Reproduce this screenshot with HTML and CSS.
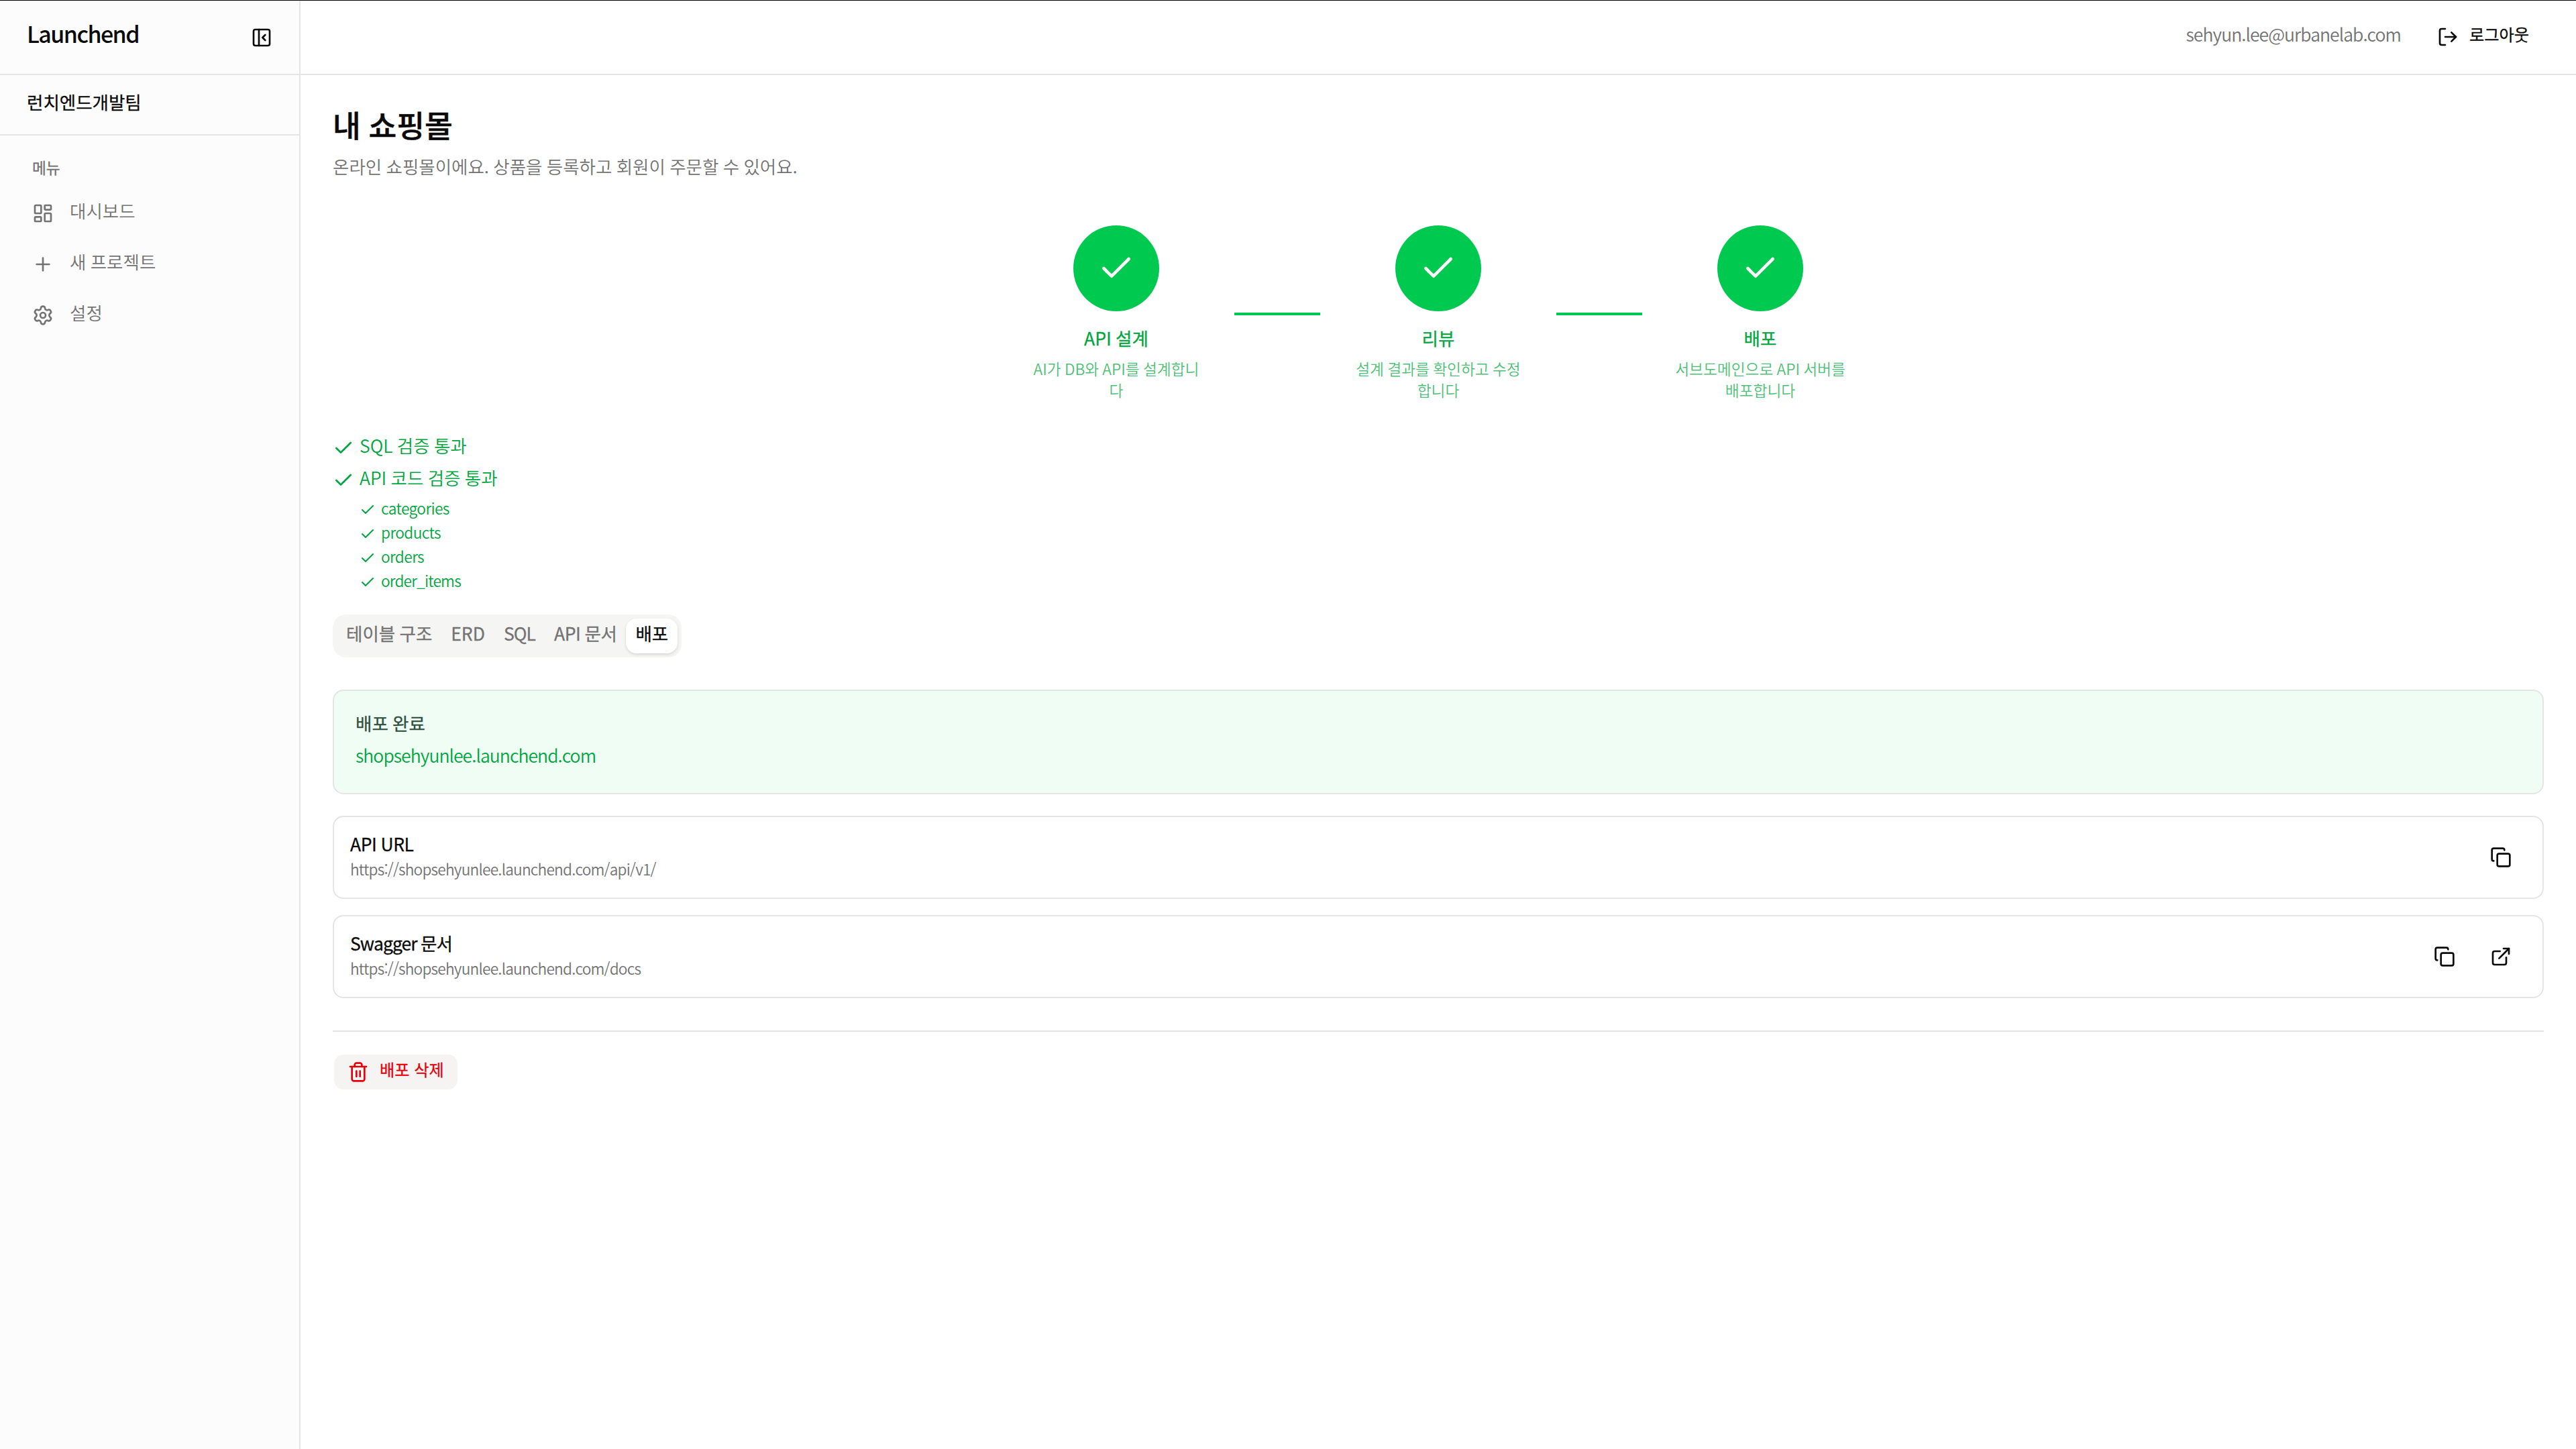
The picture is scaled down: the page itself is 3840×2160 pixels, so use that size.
FILE: index.html
```html
<!DOCTYPE html>
<html lang="ko">
<head>
  <meta charset="utf-8">
  <title>Launchend</title>
  <meta name="viewport" content="width=device-width, initial-scale=1">
  <link rel="stylesheet" href="styles.css">
</head>
<body>
  <aside class="sidebar">
    <div class="brand">
      <span class="text logo">Launchend</span>
      <svg class="icon" viewBox="0 0 24 24"><rect x="3" y="3" width="18" height="18" rx="2"/><path d="M9 3v18"/><path d="m16 15-3-3 3-3"/></svg>
    </div>
    <div class="team"><span class="text medium">런치엔드개발팀</span></div>
    <nav class="menu">
      <span class="text small medium menu-label">메뉴</span>
      <a class="menu-item">
        <svg class="icon" viewBox="0 0 24 24"><rect x="3" y="3" width="7" height="9" rx="1"/><rect x="14" y="3" width="7" height="5" rx="1"/><rect x="14" y="12" width="7" height="9" rx="1"/><rect x="3" y="16" width="7" height="5" rx="1"/></svg>
        <span class="text">대시보드</span>
      </a>
      <a class="menu-item">
        <svg class="icon" viewBox="0 0 24 24"><path d="M5 12h14"/><path d="M12 5v14"/></svg>
        <span class="text">새 프로젝트</span>
      </a>
      <a class="menu-item">
        <svg class="icon" viewBox="0 0 24 24"><path d="M9.671 4.136a2.34 2.34 0 0 1 4.659 0 2.34 2.34 0 0 0 3.319 1.915 2.34 2.34 0 0 1 2.33 4.033 2.34 2.34 0 0 0 0 3.831 2.34 2.34 0 0 1-2.33 4.033 2.34 2.34 0 0 0-3.319 1.915 2.34 2.34 0 0 1-4.659 0 2.34 2.34 0 0 0-3.32-1.915 2.34 2.34 0 0 1-2.33-4.033 2.34 2.34 0 0 0 0-3.831A2.34 2.34 0 0 1 6.35 6.051a2.34 2.34 0 0 0 3.319-1.915"/><circle cx="12" cy="12" r="3"/></svg>
        <span class="text">설정</span>
      </a>
    </nav>
  </aside>

  <div class="page">
    <header class="topbar">
      <span class="text latin muted">sehyun.lee@urbanelab.com</span>
      <button class="btn">
        <svg class="icon" viewBox="0 0 24 24"><path d="M9 21H5a2 2 0 0 1-2-2V5a2 2 0 0 1 2-2h4"/><path d="m16 17 5-5-5-5"/><path d="M21 12H9"/></svg>
        <span class="text medium">로그아웃</span>
      </button>
    </header>

    <main class="content">
      <h1 class="text title">내 쇼핑몰</h1>
      <p class="text muted subtitle">온라인 쇼핑몰이에요. 상품을 등록하고 회원이 주문할 수 있어요.</p>

      <div class="stepper">
        <div class="step">
          <div class="circle"><svg class="icon" viewBox="0 0 24 24"><path d="M20 6 9 17l-5-5"/></svg></div>
          <span class="text medium">API 설계</span>
          <p class="text small step-desc">AI가 DB와 API를 설계합니다</p>
        </div>
        <div class="line"></div>
        <div class="step">
          <div class="circle"><svg class="icon" viewBox="0 0 24 24"><path d="M20 6 9 17l-5-5"/></svg></div>
          <span class="text medium">리뷰</span>
          <p class="text small step-desc">설계 결과를 확인하고 수정합니다</p>
        </div>
        <div class="line"></div>
        <div class="step">
          <div class="circle"><svg class="icon" viewBox="0 0 24 24"><path d="M20 6 9 17l-5-5"/></svg></div>
          <span class="text medium">배포</span>
          <p class="text small step-desc">서브도메인으로 API 서버를 배포합니다</p>
        </div>
      </div>

      <div class="checks">
        <div class="check"><svg class="icon" viewBox="0 0 24 24"><path d="M20 6 9 17l-5-5"/></svg><span class="text">SQL 검증 통과</span></div>
        <div class="check"><svg class="icon" viewBox="0 0 24 24"><path d="M20 6 9 17l-5-5"/></svg><span class="text">API 코드 검증 통과</span></div>
        <div class="subchecks">
          <div class="check"><svg class="icon" viewBox="0 0 24 24"><path d="M20 6 9 17l-5-5"/></svg><span class="text small table-name">categories</span></div>
          <div class="check"><svg class="icon" viewBox="0 0 24 24"><path d="M20 6 9 17l-5-5"/></svg><span class="text small table-name">products</span></div>
          <div class="check"><svg class="icon" viewBox="0 0 24 24"><path d="M20 6 9 17l-5-5"/></svg><span class="text small table-name">orders</span></div>
          <div class="check"><svg class="icon" viewBox="0 0 24 24"><path d="M20 6 9 17l-5-5"/></svg><span class="text latin small">order_items</span></div>
        </div>
      </div>

      <div class="tabs">
        <a class="tab"><span class="text medium">테이블 구조</span></a>
        <a class="tab"><span class="text medium">ERD</span></a>
        <a class="tab"><span class="text latin medium">SQL</span></a>
        <a class="tab"><span class="text tight medium">API 문서</span></a>
        <a class="tab active"><span class="text medium">배포</span></a>
      </div>

      <div class="card done">
        <p class="text medium">배포 완료</p>
        <a class="text latin done-url">shopsehyunlee.launchend.com</a>
      </div>

      <div class="card row">
        <div class="info">
          <p class="text tight medium">API URL</p>
          <p class="text latin small muted">https://shopsehyunlee.launchend.com/api/v1/</p>
        </div>
        <div class="actions">
          <button class="icon-btn"><svg class="icon" viewBox="0 0 24 24"><rect x="8" y="8" width="14" height="14" rx="2"/><path d="M4 16c-1.100 0-2-.9-2-2V4c0-1.100.9-2 2-2h10c1.100 0 2 .9 2 2"/></svg></button>
        </div>
      </div>

      <div class="card row">
        <div class="info">
          <p class="text latin medium">Swagger 문서</p>
          <p class="text latin small muted">https://shopsehyunlee.launchend.com/docs</p>
        </div>
        <div class="actions">
          <button class="icon-btn"><svg class="icon" viewBox="0 0 24 24"><rect x="8" y="8" width="14" height="14" rx="2"/><path d="M4 16c-1.100 0-2-.9-2-2V4c0-1.100.9-2 2-2h10c1.100 0 2 .9 2 2"/></svg></button>
          <button class="icon-btn"><svg class="icon" viewBox="0 0 24 24"><path d="M15 3h6v6"/><path d="M10 14 21 3"/><path d="M18 13v6a2 2 0 0 1-2 2H5a2 2 0 0 1-2-2V8a2 2 0 0 1 2-2h6"/></svg></button>
        </div>
      </div>

      <div class="danger">
        <button class="btn btn-delete">
          <svg class="icon" viewBox="0 0 24 24"><path d="M3 6h18"/><path d="M19 6v14c0 1-1 2-2 2H7c-1 0-2-1-2-2V6"/><path d="M8 6V4c0-1 1-2 2-2h4c1 0 2 1 2 2v2"/><path d="M10 11v6"/><path d="M14 11v6"/></svg>
          <span class="text medium">배포 삭제</span>
        </button>
      </div>
    </main>
  </div>
</body>
</html>
```

FILE: styles.css
```css
* { box-sizing:border-box; margin:0; padding:0; }
body { display:flex; min-height:2160px; background:#fff; color:#0a0a0a;
       font-family:"Noto Sans CJK KR",sans-serif; font-size:26.5px; font-weight:350; line-height:40px;
       word-spacing:-.04em; box-shadow:inset 0 1px 0 #000; }
button { border:0; background:none; font:inherit; color:inherit; }

/* text sits slightly above the middle of its line */
.text { display:block; margin-top:-.15em; margin-bottom:.15em; white-space:nowrap; }
.small { margin-top:-.11em; margin-bottom:.11em; font-size:22.7px; line-height:32px; }
.medium { font-weight:400; -webkit-text-stroke:.3px currentColor; }
.latin { letter-spacing:-.035em; }
.tight { letter-spacing:-.015em; }
.muted { color:#737373; }
.icon { display:block; flex:none; width:32px; height:32px; fill:none; stroke:currentColor;
        stroke-width:2; stroke-linecap:round; stroke-linejoin:round; }

.sidebar { flex:none; width:448px; margin-top:1px; background:#fcfcfc; border-right:2px solid #e5e5e5; }
.brand { display:flex; justify-content:space-between; align-items:center; height:111px;
         padding:0 40px; border-bottom:2px solid #e5e5e5; }
.logo { font-size:34px; font-weight:500; letter-spacing:-.047em; }
.team { display:flex; align-items:center; height:90px; padding:0 40px; border-bottom:2px solid #e5e5e5; }
.menu { display:flex; flex-direction:column; gap:4px; padding:32px 16px; color:#737373; }
.menu-label { height:44px; padding:0 32px; line-height:36px; }
.menu-item { display:flex; align-items:center; gap:24px; height:72px; padding:0 32px; }

.page { flex:1; }
.topbar { display:flex; justify-content:flex-end; align-items:center; gap:32px; height:112px;
          padding:0 48px; border-bottom:2px solid #e5e5e5; }
.btn { display:flex; align-items:center; gap:16px; height:56px; padding:0 22px; font-size:24.2px; }

.content { display:flex; flex-direction:column; padding:48px; }
.title { font-size:45.4px; font-weight:500; line-height:64px; -webkit-text-stroke:.5px currentColor; }
.subtitle { padding-top:8px; }

.stepper { display:flex; justify-content:center; align-items:center; gap:48px; margin-top:64px; }
.step { display:flex; flex-direction:column; align-items:center; width:256px; color:#00a63e; }
.circle { display:flex; justify-content:center; align-items:center; width:128px; height:128px;
          margin-bottom:24px; border-radius:50%; background:#00c950; color:#fff; }
.circle .icon { width:56px; height:56px; }
.step-desc { width:256px; padding-top:8px; text-align:center; white-space:normal; opacity:.7; }
.line { width:128px; height:4px; background:#00c950; }

.checks { display:flex; flex-direction:column; gap:8px; margin-top:48px; color:#00a63e; }
.check { display:flex; align-items:center; gap:8px; }
.subchecks { display:flex; flex-direction:column; gap:4px; padding-left:40px; }
.subchecks .icon { width:24px; height:24px; }
.table-name { letter-spacing:-.025em; }

.tabs { display:flex; width:fit-content; height:64px; margin-top:32px; padding:6px;
        border-radius:20px; background:#f5f5f4; color:#737373; }
.tab { display:flex; align-items:center; padding:0 14px; border-radius:16px; }
.tab.active { background:#fff; color:#0a0a0a; box-shadow:0 2px 4px rgba(0,0,0,.12); }

.card { margin-top:24px; border:2px solid #e5e5e5; border-radius:16px; }
.done { display:flex; flex-direction:column; gap:8px; margin:48px 0 8px; padding:32px;
        background:#f0fdf4; color:#30503e; }
.done-url { color:#00a63e; }
.row { display:flex; justify-content:space-between; align-items:center; padding:24px; }
.info { display:flex; flex-direction:column; }
.actions { display:flex; gap:8px; }
.icon-btn { display:flex; justify-content:center; align-items:center; width:76px; height:56px; }

.danger { margin-top:48px; padding-top:32px; border-top:2px solid #e5e5e5; }
.btn-delete { border:2px solid transparent; border-radius:16px; padding:0 20px;
              background:#f6f3f3; background-clip:padding-box; color:#e7000b; }
```
